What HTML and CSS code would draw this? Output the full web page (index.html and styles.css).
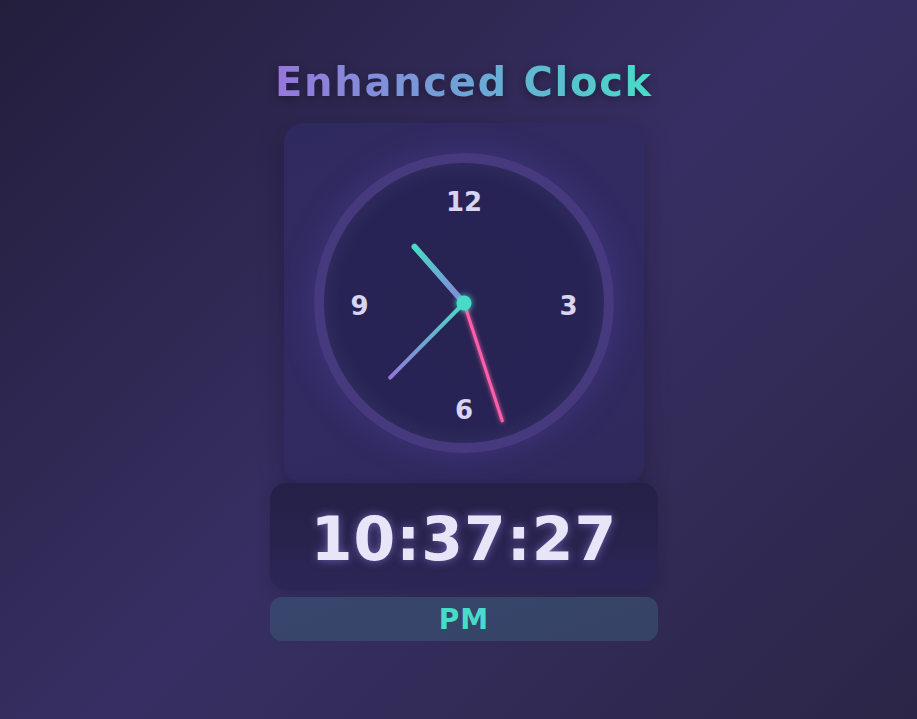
FILE: index.html
```html
<!DOCTYPE html>
<html lang="en">
<head>
<meta charset="utf-8">
<title>Enhanced Clock</title>
<link rel="stylesheet" href="styles.css">
</head>
<body>
<main class="page">
  <h1 class="title">Enhanced Clock</h1>
  <section class="card">
    <div class="clock">
      <svg class="clock-svg" width="300" height="300" viewBox="0 0 300 300">
        <defs>
          <radialGradient id="face" cx="50%" cy="50%" r="50%">
            <stop offset="0%" stop-color="#272353"/>
            <stop offset="85%" stop-color="#272354"/>
            <stop offset="100%" stop-color="#2e2c5e"/>
          </radialGradient>
          <linearGradient id="hourGrad" gradientUnits="userSpaceOnUse" x1="0" y1="0" x2="0" y2="-75">
            <stop offset="0%" stop-color="#8a80db"/>
            <stop offset="100%" stop-color="#48dcc8"/>
          </linearGradient>
          <linearGradient id="minGrad" gradientUnits="userSpaceOnUse" x1="0" y1="0" x2="0" y2="-105">
            <stop offset="0%" stop-color="#48dcc8"/>
            <stop offset="100%" stop-color="#9276dc"/>
          </linearGradient>
          <filter id="glowPink" filterUnits="userSpaceOnUse" x="0" y="0" width="300" height="300">
            <feGaussianBlur stdDeviation="2" result="b"/>
            <feMerge><feMergeNode in="b"/><feMergeNode in="SourceGraphic"/></feMerge>
          </filter>
          <filter id="glowTeal" filterUnits="userSpaceOnUse" x="0" y="0" width="300" height="300">
            <feGaussianBlur stdDeviation="3" result="b"/>
            <feMerge><feMergeNode in="b"/><feMergeNode in="SourceGraphic"/></feMerge>
          </filter>
        </defs>
        <circle cx="150" cy="150" r="145" fill="url(#face)" stroke="#46397d" stroke-width="10"/>
        <g class="numbers">
          <text x="150" y="58" text-anchor="middle">12</text>
          <text x="254.5" y="162" text-anchor="middle">3</text>
          <text x="150" y="266" text-anchor="middle">6</text>
          <text x="45.5" y="162" text-anchor="middle">9</text>
        </g>
        <g transform="translate(150 150) rotate(318.7)">
          <line x1="0" y1="0" x2="0" y2="-75" stroke="url(#hourGrad)" stroke-width="6" stroke-linecap="round"/>
        </g>
        <g transform="translate(150 150) rotate(224.7)">
          <line x1="0" y1="0" x2="0" y2="-105" stroke="url(#minGrad)" stroke-width="4" stroke-linecap="round"/>
        </g>
        <g filter="url(#glowPink)">
          <g transform="translate(150 150) rotate(162)">
            <line x1="0" y1="0" x2="0" y2="-124" stroke="#ff5fa9" stroke-width="3" stroke-linecap="round"/>
          </g>
        </g>
        <g filter="url(#glowTeal)">
          <circle cx="150" cy="150" r="7.5" fill="#46dbc8"/>
        </g>
      </svg>
    </div>
  </section>
  <div class="digital">10:37:27</div>
  <div class="ampm">PM</div>
</main>
</body>
</html>
```

FILE: styles.css
```css
* { box-sizing: border-box; }

html, body {
  margin: 0;
  height: 100%;
}

body {
  background: linear-gradient(135deg, #231e3c 0%, #372f63 50%, #2b2647 100%);
  font-family: "DejaVu Sans", Verdana, sans-serif;
  overflow: hidden;
}

.page {
  display: flex;
  flex-direction: column;
  align-items: center;
  padding-top: 59px;
  padding-left: 11px;
}

.title {
  margin: 0 0 18px;
  font-size: 40px;
  font-weight: bold;
  letter-spacing: 1.7px;
  line-height: normal;
  background: linear-gradient(90deg, #9776dc 0%, #6fa3d6 50%, #48dcc9 100%);
  -webkit-background-clip: text;
  background-clip: text;
  -webkit-text-fill-color: transparent;
  color: transparent;
  filter: drop-shadow(0 3px 5px rgba(0, 0, 0, 0.35));
}

.card {
  width: 360px;
  height: 360px;
  padding: 30px;
  border-radius: 20px;
  background: linear-gradient(160deg, #2f2a5e 0%, #312b63 50%, #2f295c 100%);
  box-shadow: 0 8px 24px rgba(20, 14, 40, 0.35);
}

.clock {
  width: 300px;
  height: 300px;
  border-radius: 50%;
  box-shadow: 0 0 34px rgba(110, 80, 200, 0.28);
}

.clock-svg { display: block; }

.numbers text {
  font-family: "DejaVu Sans", Verdana, sans-serif;
  font-weight: bold;
  font-size: 26px;
  fill: #d9d4f0;
}

.digital {
  width: 388px;
  padding: 21px 0 16px;
  border-radius: 16px;
  background: linear-gradient(180deg, #252046 0%, #2b2655 100%);
  box-shadow: 0 4px 14px rgba(20, 14, 40, 0.25);
  text-align: center;
  font-size: 60px;
  font-weight: bold;
  line-height: 70px;
  letter-spacing: 1px;
  color: #e8e5f8;
  text-shadow: 0 0 10px rgba(170, 150, 255, 0.55);
}

.ampm {
  width: 388px;
  height: 44px;
  margin-top: 7px;
  padding-top: 1px;
  border-radius: 12px;
  background: linear-gradient(160deg, #38466d 0%, #364366 100%);
  text-align: center;
  font-size: 28px;
  font-weight: bold;
  line-height: 44px;
  letter-spacing: 1px;
  color: #48dbc9;
}
```
